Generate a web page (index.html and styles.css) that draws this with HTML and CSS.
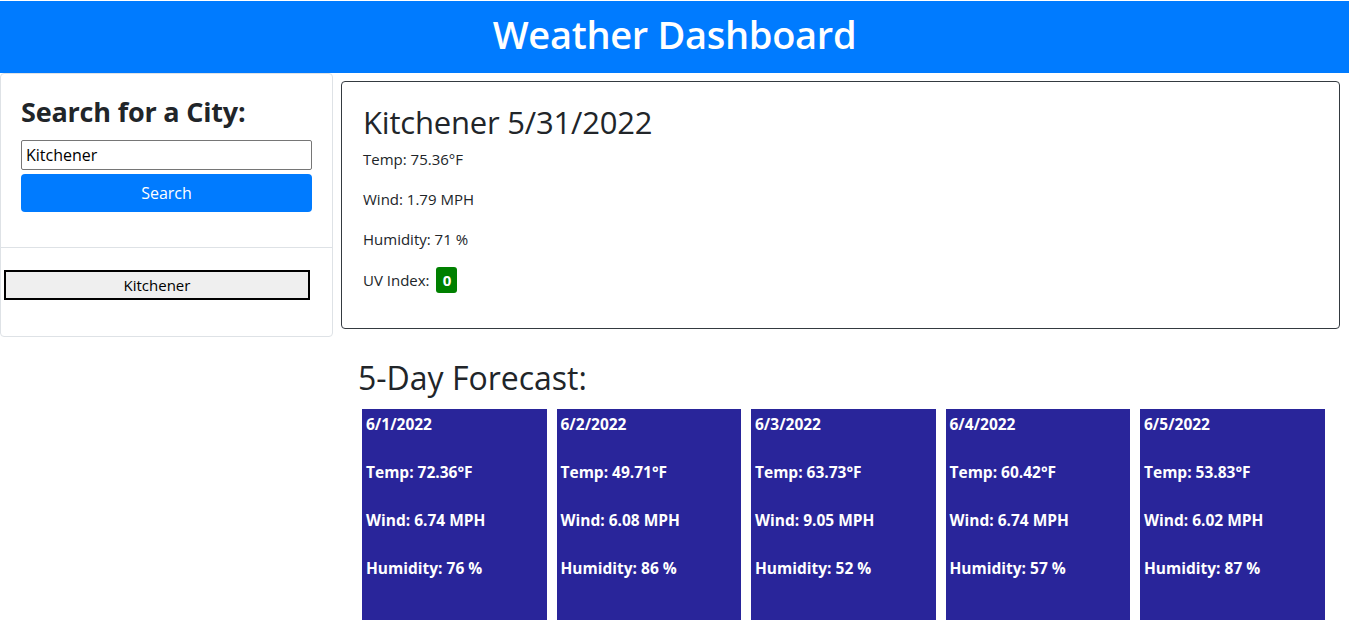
FILE: index.html
```html
<!DOCTYPE html>
<html>
<head>
<meta charset="utf-8">
<title>Weather Dashboard</title>
<link rel="stylesheet" href="styles.css">
</head>
<body>
<header class="header"><h1 class="title">Weather Dashboard</h1></header>
<div class="layout">
  <aside class="sidebar">
    <div class="search-body">
      <h2 class="search-title">Search for a City:</h2>
      <input class="city-input" type="text" value="Kitchener">
      <button class="search-btn">Search</button>
    </div>
    <div class="history">
      <button class="history-btn">Kitchener</button>
    </div>
  </aside>
  <main class="main">
    <section class="current">
      <h2 class="current-title">Kitchener 5/31/2022</h2>
      <p class="stat">Temp: 75.36°F</p>
      <p class="stat">Wind: 1.79 MPH</p>
      <p class="stat">Humidity: 71 %</p>
      <p class="stat">UV Index: <span class="uv">0</span></p>
    </section>
    <h2 class="forecast-title">5-Day Forecast:</h2>
    <div class="forecast">
      <div class="day"><p>6/1/2022</p><p>Temp: 72.36°F</p><p>Wind: 6.74 MPH</p><p>Humidity: 76 %</p></div>
      <div class="day"><p>6/2/2022</p><p>Temp: 49.71°F</p><p>Wind: 6.08 MPH</p><p>Humidity: 86 %</p></div>
      <div class="day"><p>6/3/2022</p><p>Temp: 63.73°F</p><p>Wind: 9.05 MPH</p><p>Humidity: 52 %</p></div>
      <div class="day"><p>6/4/2022</p><p>Temp: 60.42°F</p><p>Wind: 6.74 MPH</p><p>Humidity: 57 %</p></div>
      <div class="day"><p>6/5/2022</p><p>Temp: 53.83°F</p><p>Wind: 6.02 MPH</p><p>Humidity: 87 %</p></div>
    </div>
  </main>
</div>
</body>
</html>
```
FILE: styles.css
```css
* { box-sizing: border-box; }
html, body { margin: 0; padding: 0; }
body {
  font-family: "Open Sans", "Noto Sans", sans-serif;
  color: #212529;
  background: #fff;
  font-size: 16px;
  line-height: 1.5;
  padding-top: 1px;
  padding-right: 3px;
}
.header {
  background: #007bff;
  height: 72px;
  display: flex;
  align-items: center;
  justify-content: center;
  padding-bottom: 4px;
}
.title {
  margin: 0;
  color: #fff;
  font-size: 38px;
  font-weight: 600;
  line-height: 1.2;
  letter-spacing: -0.3px;
}
.layout {
  display: flex;
  align-items: flex-start;
}
.sidebar {
  width: 333px;
  flex: none;
  border: 1px solid #dee2e6;
  border-radius: 4px;
}
.search-body {
  padding: 22px 20px 35px 20px;
}
.search-title {
  margin: 0 0 12px 0;
  font-size: 27px;
  font-weight: 700;
  line-height: 1.2;
  letter-spacing: -0.2px;
}
.city-input {
  display: block;
  width: 100%;
  height: 30px;
  font-family: inherit;
  font-size: 16px;
  padding: 1px 4px;
  border: 1px solid #767676;
  border-radius: 2px;
  color: #000;
  margin-bottom: 4px;
}
.search-btn {
  display: block;
  width: 100%;
  height: 38px;
  background: #007bff;
  color: #fff;
  border: none;
  border-radius: 4px;
  font-family: inherit;
  font-size: 16px;
}
.history {
  border-top: 1px solid #dee2e6;
  padding: 22px 22px 36px 3px;
}
.history-btn {
  display: block;
  width: 306px;
  height: 30px;
  background: #efefef;
  border: 2px solid #000;
  font-family: inherit;
  font-size: 15px;
  color: #000;
}
.main {
  flex: 1;
  margin: 8px 9px 0 8px;
}
.current {
  border: 1px solid #343a40;
  border-radius: 4px;
  padding: 22px 21px 16px 21px;
  height: 248px;
}
.current-title {
  margin: 0 0 6px 0;
  font-size: 31px;
  font-weight: 500;
  line-height: 1.2;
  letter-spacing: -0.2px;
}
.stat {
  margin: 0 0 16px 0;
  font-size: 15px;
  line-height: 24px;
}
.uv {
  display: inline-block;
  background: #008000;
  color: #fff;
  font-weight: 700;
  width: 21px;
  height: 26px;
  line-height: 26px;
  text-align: center;
  border-radius: 3px;
  margin-left: 3px;
}
.forecast-title {
  margin: 30px 0 12px 17px;
  font-size: 32px;
  font-weight: 500;
  line-height: 1.2;
}
.forecast {
  display: flex;
  gap: 10px;
  margin-left: 21px;
}
.day {
  width: 184.5px;
  height: 220px;
  background: #29259a;
  color: #fff;
  padding: 3px 4px;
  font-weight: 700;
  font-size: 15.5px;
}
.day p {
  margin: 0 0 24px 0;
  line-height: 24px;
}
```
